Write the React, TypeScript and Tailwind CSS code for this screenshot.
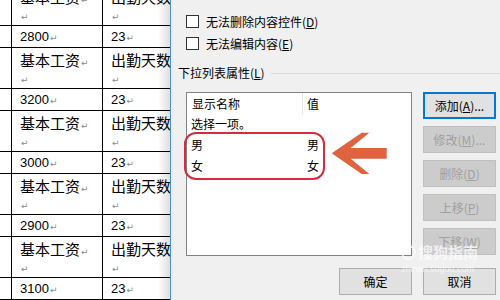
import React from "react";

const cjk = { fontFamily: '"Noto Sans CJK SC", "Liberation Sans", sans-serif' };
const doc = { fontFamily: '"Liberation Sans", "Noto Sans CJK SC", sans-serif' };

function Mark() {
  return <span className="text-[9px] text-[#8a8a8a] ml-[1px]" style={{ fontFamily: '"DejaVu Sans", sans-serif' }}>↵</span>;
}

function TallRow({ cut }: { cut?: boolean }) {
  return (
    <div className="grid grid-cols-[12px_91px_1fr] h-[41px] border-b border-black">
      <div className="border-r border-black" />
      <div className="border-r border-black pl-[8px] pt-[2px]">
        <div className="h-[20px] leading-[20px] text-[15px] whitespace-nowrap" style={cjk}>基本工资<Mark /></div>
        <div className="h-[16px] leading-[16px]"><Mark /></div>
      </div>
      <div className="pl-[8px] pt-[2px] overflow-hidden">
        <div className="h-[20px] leading-[20px] text-[15px] whitespace-nowrap" style={cjk}>出勤天数</div>
        <div className="h-[16px] leading-[16px]"><Mark /></div>
      </div>
    </div>
  );
}

function ShortRow({ v, h }: { v: string; h: string }) {
  return (
    <div className={`grid grid-cols-[12px_91px_1fr] ${h} border-b border-black`}>
      <div className="border-r border-black" />
      <div className="border-r border-black pl-[8px] leading-[21px] text-[13px]">{v}<Mark /></div>
      <div className="pl-[8px] leading-[21px] text-[13px]">23<Mark /></div>
    </div>
  );
}

function Btn({ children, kind }: { children: React.ReactNode; kind: "default" | "disabled" | "normal" }) {
  const cls =
    kind === "default"
      ? "border-2 border-[#0078d7] bg-[#e1e1e1] text-black"
      : kind === "disabled"
      ? "border border-[#bfbfbf] bg-[#cccccc] text-[#a0a0a0]"
      : "border border-[#adadad] bg-[#e1e1e1] text-black";
  return (
    <div className={`w-[73px] h-[27px] flex items-center justify-center text-[12px] leading-none ${cls}`} style={cjk}>
      {children}
    </div>
  );
}

function Check({ children }: { children: React.ReactNode }) {
  return (
    <div className="flex items-center h-[13px] ml-[15px]">
      <div className="w-[13px] h-[13px] border border-[#333333] bg-white" />
      <div className="ml-[7px] text-[12px] leading-[16px]" style={cjk}>{children}</div>
    </div>
  );
}

export default function App() {
  return (
    <div className="w-[500px] h-[300px] flex overflow-hidden bg-white">
      <div className="w-[170px] h-[300px] relative overflow-hidden bg-white text-black" style={doc}>
        <div className="-mt-[15px]">
          <TallRow />
          <ShortRow v="2800" h="h-[22px]" />
          <TallRow />
          <ShortRow v="3200" h="h-[22px]" />
          <TallRow />
          <ShortRow v="3000" h="h-[22px]" />
          <TallRow />
          <ShortRow v="2900" h="h-[22px]" />
          <TallRow />
          <ShortRow v="3100" h="h-[22px]" />
        </div>
        <div className="absolute right-0 top-0 bottom-0 w-[12px] bg-gradient-to-r from-transparent to-[rgba(0,0,0,0.13)]" />
      </div>
      <div className="flex-1 h-[300px] bg-[#f0f0f0] border-l border-[#4a90d9] relative flex flex-col pt-[15px] text-black">
        <Check>无法删除内容控件(<span className="underline">D</span>)</Check>
        <div className="mt-[9px]">
          <Check>无法编辑内容(<span className="underline">E</span>)</Check>
        </div>
        <div className="mt-[15px] ml-[7px] flex items-center">
          <div className="text-[12px] leading-[16px]" style={cjk}>下拉列表属性(<span className="underline">L</span>)</div>
          <div className="flex-1 ml-[6px] h-px bg-[#dcdcdc]" />
        </div>
        <div className="mt-[11px] flex">
          <div className="ml-[15px] w-[226px] h-[164px] border border-[#828282] bg-white relative text-[12px]" style={cjk}>
            <div className="flex h-[21px] items-center">
              <div className="w-[116px] h-full pl-[5px] flex items-center border-r border-[#e5e5e5]">显示名称</div>
              <div className="pl-[4px]">值</div>
            </div>
            <div className="flex h-[20px] items-center pl-[4px]">选择一项。</div>
            <div className="flex h-[22px] items-center">
              <div className="w-[117px] pl-[4px]">男</div>
              <div className="pl-[3px]">男</div>
            </div>
            <div className="flex h-[20px] items-center">
              <div className="w-[117px] pl-[4px]">女</div>
              <div className="pl-[3px]">女</div>
            </div>
            <div className="absolute left-[-3px] top-[39px] w-[141px] h-[48px] border-2 border-[#d62b3f] rounded-[12px]" />
            <svg className="absolute left-[144px] top-[39px]" width="58" height="44" viewBox="0 0 58 44">
              <polygon
                points="0.7,21.3 30.7,0.7 38.3,0.7 19.7,16 55.7,16 55.7,26.7 19.7,26.7 38.3,42 30.7,42"
                fill="#e0633f"
              />
            </svg>
          </div>
          <div className="ml-[11px] flex flex-col gap-[7px]">
            <Btn kind="default">添加(<span className="underline">A</span>)...</Btn>
            <Btn kind="disabled">修改(<span className="underline">M</span>)...</Btn>
            <Btn kind="disabled">删除(<span className="underline">D</span>)</Btn>
            <Btn kind="disabled">上移(<span className="underline">P</span>)</Btn>
            <Btn kind="disabled">下移(<span className="underline">W</span>)</Btn>
          </div>
        </div>
        <div className="mt-[12px] flex pl-[168px] gap-[11px]">
          <Btn kind="normal">确定</Btn>
          <Btn kind="normal">取消</Btn>
        </div>
        <div className="absolute left-[230px] top-[243px] flex flex-col items-start opacity-70 pointer-events-none">
          <div className="flex items-center">
            <div className="w-[15px] h-[15px] rounded-full border-2 border-white" />
            <div className="ml-[2px] text-[15px] leading-[18px] text-white font-bold" style={cjk}>搜狗指南</div>
          </div>
          <div className="text-[9px] leading-[12px] text-white mt-[2px]" style={{ fontFamily: '"Liberation Sans", sans-serif' }}>zhinan.sogou.com</div>
        </div>
      </div>
    </div>
  );
}
